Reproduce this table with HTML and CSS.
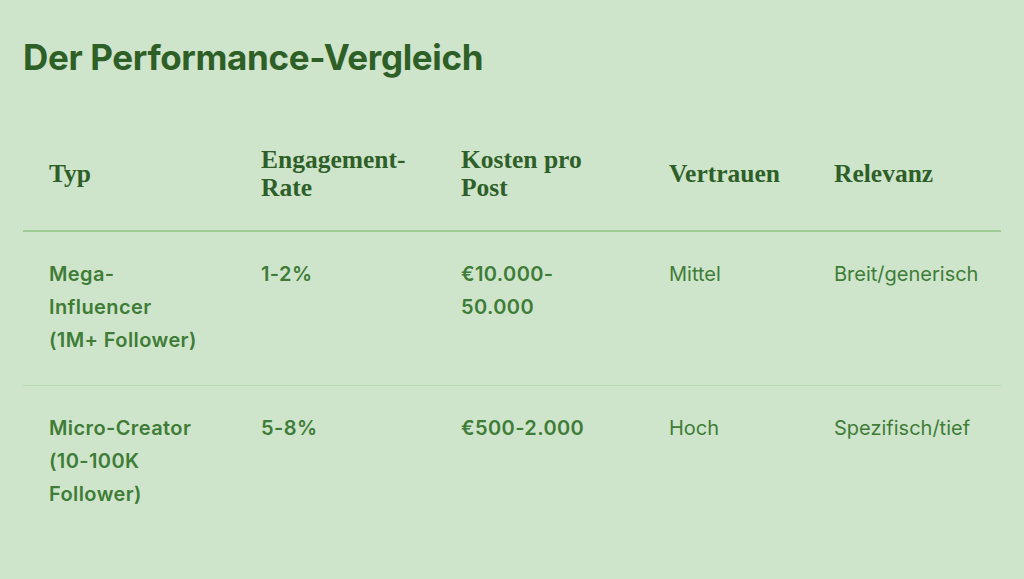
FILE: index.html
```html
<!DOCTYPE html>
<html lang="de">
<head>
<meta charset="utf-8">
<title>Der Performance-Vergleich</title>
<link rel="stylesheet" href="styles.css">
</head>
<body>
<main class="page">
  <h2 class="title">Der Performance-Vergleich</h2>
  <table class="compare">
    <colgroup>
      <col class="c1"><col class="c2"><col class="c3"><col class="c4"><col class="c5">
    </colgroup>
    <thead>
      <tr>
        <th>Typ</th>
        <th>Engagement-<br>Rate</th>
        <th>Kosten pro<br>Post</th>
        <th>Vertrauen</th>
        <th>Relevanz</th>
      </tr>
    </thead>
    <tbody>
      <tr>
        <td class="strong">Mega-<br>Influencer<br>(1M+ Follower)</td>
        <td class="strong">1-2%</td>
        <td class="strong">€10.000-<br>50.000</td>
        <td>Mittel</td>
        <td>Breit/generisch</td>
      </tr>
      <tr>
        <td class="strong">Micro-Creator<br>(10-100K<br>Follower)</td>
        <td class="strong">5-8%</td>
        <td class="strong">€500-2.000</td>
        <td>Hoch</td>
        <td>Spezifisch/tief</td>
      </tr>
    </tbody>
  </table>
</main>
</body>
</html>
```

FILE: styles.css
```css
html, body {
  margin: 0;
  padding: 0;
  background: #cee5cb;
}
.page {
  padding: 36px 23px 0 23px;
  font-family: Inter, "Noto Sans", sans-serif;
}
.title {
  margin: 0 0 40px 0;
  font-size: 35px;
  line-height: 42px;
  font-weight: 700;
  color: #2e5f27;
  letter-spacing: -0.35px;
}
.compare {
  width: 978px;
  border-collapse: collapse;
  table-layout: fixed;
}
.c1 { width: 212px; }
.c2 { width: 200px; }
.c3 { width: 208px; }
.c4 { width: 165px; }
.c5 { width: 193px; }
.compare th {
  font-family: "Liberation Serif", "Times New Roman", serif;
  font-weight: 700;
  font-size: 25.5px;
  line-height: 28px;
  color: #2f5f28;
  text-align: left;
  padding: 28px 26px;
  border-bottom: 2px solid #9fcd96;
}
.compare td {
  font-size: 20px;
  line-height: 33px;
  color: #3f7c37;
  vertical-align: top;
  padding: 26px 26px 28px 26px;
  border-bottom: 1px solid #b6dbaf;
}
.compare tbody tr:last-child td {
  border-bottom: none;
}
.compare td.strong {
  font-weight: 600;
  letter-spacing: 0.4px;
}
```
